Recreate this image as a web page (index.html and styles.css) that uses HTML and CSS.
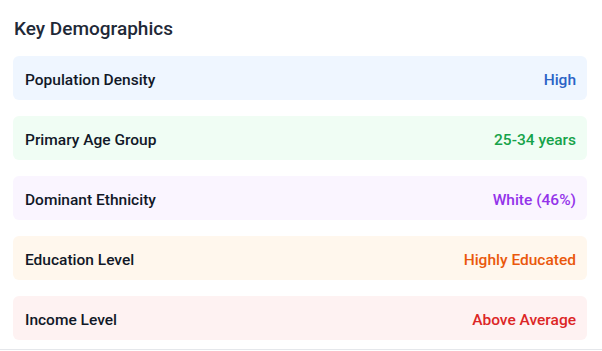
FILE: index.html
```html
<!DOCTYPE html>
<html>
<head>
<meta charset="utf-8">
<link rel="stylesheet" href="styles.css">
</head>
<body>
<div class="card">
  <h2 class="title">Key Demographics</h2>
  <div class="list">
    <div class="row blue"><span class="label">Population Density</span><span class="value">High</span></div>
    <div class="row green"><span class="label">Primary Age Group</span><span class="value">25-34 years</span></div>
    <div class="row purple"><span class="label">Dominant Ethnicity</span><span class="value">White (46%)</span></div>
    <div class="row orange"><span class="label">Education Level</span><span class="value">Highly Educated</span></div>
    <div class="row red"><span class="label">Income Level</span><span class="value">Above Average</span></div>
  </div>
</div>
</body>
</html>
```

FILE: styles.css
```css
html, body {
  margin: 0;
  padding: 0;
  background: #ffffff;
}
body {
  font-family: "Roboto", "Open Sans", sans-serif;
  color: #111827;
}
.card {
  width: 602px;
  height: 350px;
  box-sizing: border-box;
  padding: 15px 15px 0 14px;
  border-bottom: 1px solid #e5e7eb;
}
.title {
  margin: 0 0 13px 0;
  font-size: 19px;
  line-height: 28px;
  font-weight: 500;
  color: #1f2937;
}
.list {
  display: flex;
  flex-direction: column;
  gap: 16px;
  margin-left: -1px;
}
.row {
  display: flex;
  justify-content: space-between;
  align-items: center;
  height: 44px;
  box-sizing: border-box;
  padding: 3px 11px 0 12px;
  border-radius: 6px;
  font-size: 15.5px;
  font-weight: 500;
}
.label { color: #111827; }
.blue { background: #eff6ff; }
.blue .value { color: #2b63c6; }
.green { background: #f0fdf4; }
.green .value { color: #16a34a; }
.purple { background: #faf5ff; }
.purple .value { color: #9333ea; }
.orange { background: #fff7ed; }
.orange .value { color: #ea580c; }
.red { background: #fef2f2; }
.red .value { color: #dc2626; }
```
